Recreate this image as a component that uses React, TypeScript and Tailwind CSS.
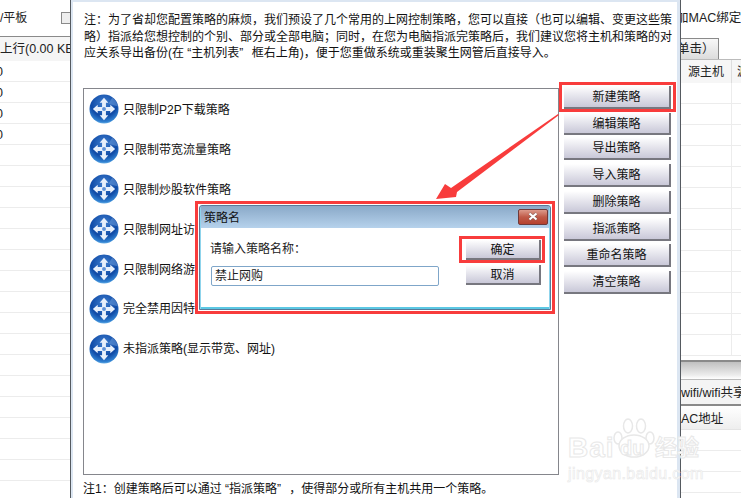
const strategies = [
  "只限制P2P下载策略",
  "只限制带宽流量策略",
  "只限制炒股软件策略",
  "只限制网址访问策略",
  "只限制网络游戏策略",
  "完全禁用因特网策略",
  "未指派策略(显示带宽、网址)",
];

const actions = [
  { label: "新建策略", cls: "h-[23px] mb-[4px]" },
  { label: "编辑策略", cls: "h-[22px] mb-[2px]" },
  { label: "导出策略", cls: "h-[23px] mb-[4px]" },
  { label: "导入策略", cls: "h-[23px] mb-[4px]" },
  { label: "删除策略", cls: "h-[23px] mb-[4px]" },
  { label: "指派策略", cls: "h-[23px] mb-[3px]" },
  { label: "重命名策略", cls: "h-[23px] mb-[4px]" },
  { label: "清空策略", cls: "h-[23px]" },
];

const StrategyIcon = () => (
  <svg width="30" height="30" viewBox="0 0 31 31" className="shrink-0 -mt-[1px]">
    <defs>
      <radialGradient id="orb" cx="50%" cy="30%" r="75%">
        <stop offset="0%" stopColor="#3f7fd0" />
        <stop offset="60%" stopColor="#0f4aa6" />
        <stop offset="85%" stopColor="#2f7fd0" />
        <stop offset="100%" stopColor="#8fd0f5" />
      </radialGradient>
    </defs>
    <circle cx="15.5" cy="15.5" r="15" fill="url(#orb)" />
    <path d="M24 4 A15 15 0 0 1 30 13 L20 10 Z" fill="#6f9fdc" opacity="0.5" />
    <path
      d="M15.5 4 L20 9 L17.5 9 L17.5 13.5 L22 13.5 L22 11 L27 15.5 L22 20 L22 17.5 L17.5 17.5 L17.5 22 L20 22 L15.5 27 L11 22 L13.5 22 L13.5 17.5 L9 17.5 L9 20 L4 15.5 L9 11 L9 13.5 L13.5 13.5 L13.5 9 L11 9 Z"
      fill="#e8f0fb"
    />
    <circle cx="15.5" cy="15.5" r="2" fill="#5f92d8" />
  </svg>
);

const ActionButton = ({ label, cls }: { label: string; cls: string }) => (
  <button className={`${cls} w-[107px] pt-[1px] flex items-center justify-center border-r-2 border-b-2 border-[#77777f] bg-gradient-to-b from-white to-[#c9c8d8] text-[12px] text-[#111]`}>
    {label}
  </button>
);

const DialogButton = ({ label }: { label: string }) => (
  <button className="w-[75px] h-[20px] pt-[1px] flex items-center justify-center border-r-2 border-b-2 border-[#77777f] bg-gradient-to-b from-white to-[#c9c8d8] text-[12px] text-[#111]">
    {label}
  </button>
);

const LeftPanel = () => (
  <div className="w-[70px] shrink-0 overflow-hidden whitespace-nowrap">
    <div className="h-[36px] flex items-center gap-[34px] text-[12px] text-[#222]">
      <span>/平板</span>
      <span className="w-[12px] h-[12px] shrink-0 border border-[#8a8a8a] bg-[#eee]" />
    </div>
    <div className="h-[25px] border-t border-[#8a8a8a] bg-[#f5f5f5] flex items-center text-[12.5px] text-[#222]">
      上行(0.00 KB
    </div>
    {Array.from({ length: 21 }).map((_, i) => (
      <div key={i} className="h-[21px] pt-[2px] border-b border-[#ececec] flex items-center text-[12.5px] text-[#222] -indent-[4px]">
        {i < 4 ? "0" : ""}
      </div>
    ))}
  </div>
);

const RightPanel = () => (
  <div className="flex-1 overflow-hidden whitespace-nowrap">
    <div className="h-[36px] flex items-center text-[12.5px] text-[#222]">
      <span className="-ml-[5px]">加MAC绑定明</span>
    </div>
    <div className="h-[24px] flex items-end border-b border-[#bbb]">
      <div className="w-[38px] h-[21px] border-t border-r border-[#8a8a8a] bg-gradient-to-b from-[#f8f8f8] to-[#dcdcdc] text-[12.5px] text-[#222] flex items-center">
        <span className="-ml-[4px]">单击）</span>
      </div>
    </div>
    <div className="h-[23px] flex items-center bg-[#f6f6f6] text-[12px] text-[#222]">
      <span className="w-[51px] pl-[7px] h-full flex items-center border-r border-[#ddd] shrink-0">源主机</span>
      <span className="pl-[5px]">源</span>
    </div>
    {Array.from({ length: 13 }).map((_, i) => (
      <div key={i} className="h-[21px] border-b border-[#ececec] flex">
        <span className="w-[51px] h-full border-r border-[#ececec] shrink-0" />
      </div>
    ))}
    <div className="mt-[4px] h-[20px] border-t-2 border-[#8a8a8a] border-b border-b-[#bbb] bg-gradient-to-b from-[#c0c0c0] from-0% via-[#ebebeb] via-75% to-white to-100%" />
    <div className="h-[26px] pt-[2px] bg-[#f4f4f4] border-b-2 border-[#8a8a8a] flex items-center text-[12.5px] text-[#222]">
      wifi/wifi共享
    </div>
    <div className="h-[24px] pt-[4px] flex items-center text-[12.5px] text-[#222] bg-gradient-to-b from-white to-[#eeeeee] border-b border-[#e4e4e4]">
      AC地址
    </div>
    {Array.from({ length: 3 }).map((_, i) => (
      <div key={i} className="h-[21px] border-b border-[#ececec]" />
    ))}
  </div>
);

// faint site watermark, bottom right
const Watermark = () => (
  <div className="absolute left-[568px] top-[418px] w-[135px] h-[64px] text-white font-bold [-webkit-text-stroke:1px_#e8e8e8] pointer-events-none">
    <svg width="44" height="40" viewBox="0 0 44 40" className="absolute left-[44px] top-[0px]" fill="white" stroke="#e8e8e8" strokeWidth="1.5">
      <ellipse cx="6" cy="20" rx="4" ry="6" />
      <ellipse cx="16" cy="8" rx="4.5" ry="7" />
      <ellipse cx="29" cy="8" rx="4.5" ry="7" />
      <ellipse cx="38" cy="20" rx="4" ry="6" />
      <ellipse cx="22" cy="28" rx="15" ry="11" />
    </svg>
    <div className="absolute left-0 top-[15px] h-[30px] flex items-center text-[28px] leading-[30px]">
      <span className="w-[52px] tracking-[1px]">Bai</span>
      <span className="relative w-[35px] text-[20px]">du</span>
      <span className="text-[22px]">经验</span>
    </div>
    <div className="absolute left-0 top-[48px] text-[16px] leading-[16px] font-normal tracking-[0.4px] [-webkit-text-stroke:0.6px_#e8e8e8]">jingyan.baidu.com</div>
  </div>
);

export default function App() {
  return (
    <div className="relative w-[741px] h-[498px] overflow-hidden flex bg-white text-[12px] [font-family:'Liberation_Sans','Noto_Sans_CJK_SC',sans-serif]">
      <LeftPanel />

      {/* policy window */}
      <div className="w-[611px] h-[498px] shrink-0 border-x border-[#555a60] bg-white">
        <div className="h-full border-l-2 border-r-[3px] border-t-2 border-[#dce6f2] pl-[11px] pr-[5px] flex flex-col">
          <p className="mt-[10px] w-[592px] h-[50px] text-[12px] leading-[16.5px] text-[#111]">
            注：为了省却您配置策略的麻烦，我们预设了几个常用的上网控制策略，您可以直接（也可以编辑、变更这些策略）指派给您想控制的个别、部分或全部电脑；同时，在您为电脑指派完策略后，我们建议您将主机和策略的对应关系导出备份(在 “主机列表”<span className="ml-[5px]"> 框右上角)，便于您重做系统或重装聚生网管后直接导入。</span>
          </p>
          <div className="flex mt-[26px] -ml-[1px]">
            <div className="w-[476px] h-[387px] border border-[#85868c] pl-[5px] pt-[1px] flex flex-col">
              {strategies.map((name) => (
                <div key={name} className="h-[39.9px] flex items-center gap-[4px] text-[12px] text-[#111]">
                  <StrategyIcon />
                  <span>{name}</span>
                </div>
              ))}
            </div>
            <div className="ml-[5px] -mt-[2px] flex flex-col">
              {actions.map((a) => (
                <ActionButton key={a.label} label={a.label} cls={a.cls} />
              ))}
            </div>
          </div>
          <p className="mt-[6px] -ml-[1px] text-[12px] leading-[16px] text-[#111] whitespace-nowrap">
            注1：创建策略后可以通过 “指派策略”<span className="ml-[5px]"> ，使得部分或所有主机共用一个策略。</span>
          </p>
        </div>
      </div>

      <RightPanel />
      <Watermark />

      {/* arrow annotation */}
      <svg width="741" height="498" className="absolute left-0 top-0 pointer-events-none">
        <polygon points="558,114 559,115 457,192 456,197 436,199 445,184 451,188" fill="#f83c3c" />
      </svg>

      {/* annotation around the first button */}
      <div className="absolute left-[559px] top-[82px] w-[117px] h-[30px] border-[3px] border-[#f83c3c]" />

      {/* name dialog */}
      <div className="absolute left-[195px] top-[201px] w-[360px] h-[113px] border-[3px] border-[#f83c3c] bg-white p-[1px]">
        <div className="h-full flex flex-col rounded-t-[3px] border border-[#5a7a99] bg-[#8fd4ec] px-[1px]">
          <div className="h-[22px] shrink-0 flex items-center justify-between pl-[3px] pr-[1px] pt-[2px] bg-gradient-to-b from-[#8aa9c8] to-[#b6d2ec] text-[12px] text-[#111]">
            <span>策略名</span>
            <span className="w-[30px] h-[16px] -mt-[3px] flex items-center justify-center rounded-[2px] border border-[#6e3a3a] bg-gradient-to-b from-[#dc9a8c] via-[#c05a48] to-[#b5412e]">
              <svg width="14" height="11" viewBox="0 0 14 11">
                <path d="M3.5 2.5 L10.5 8.5 M10.5 2.5 L3.5 8.5" stroke="#555" strokeWidth="3.4" opacity="0.5" />
                <path d="M3.5 2.5 L10.5 8.5 M10.5 2.5 L3.5 8.5" stroke="white" strokeWidth="2.2" />
              </svg>
            </span>
          </div>
          <div className="flex-1 flex bg-white border-b-2 border-[#5cc8e4]">
            <div className="w-[265px] pl-[10px] pt-[13px] shrink-0">
              <div className="-ml-[1px] h-[16px] leading-[16px] text-[12px] text-[#222]">请输入策略名称：</div>
              <div className="mt-[9px] w-[228px] h-[20px] pl-[3px] flex items-center rounded-[2px] border border-[#7fa6c9] text-[12px] text-[#222]">
                禁止网购
              </div>
            </div>
            <div className="pt-[12px] flex flex-col gap-[5px]">
              <DialogButton label="确定" />
              <DialogButton label="取消" />
            </div>
          </div>
        </div>
      </div>

      {/* annotation around the confirm button */}
      <div className="absolute left-[459px] top-[236px] w-[86px] h-[27px] border-[3px] border-[#f83c3c]" />
    </div>
  );
}
